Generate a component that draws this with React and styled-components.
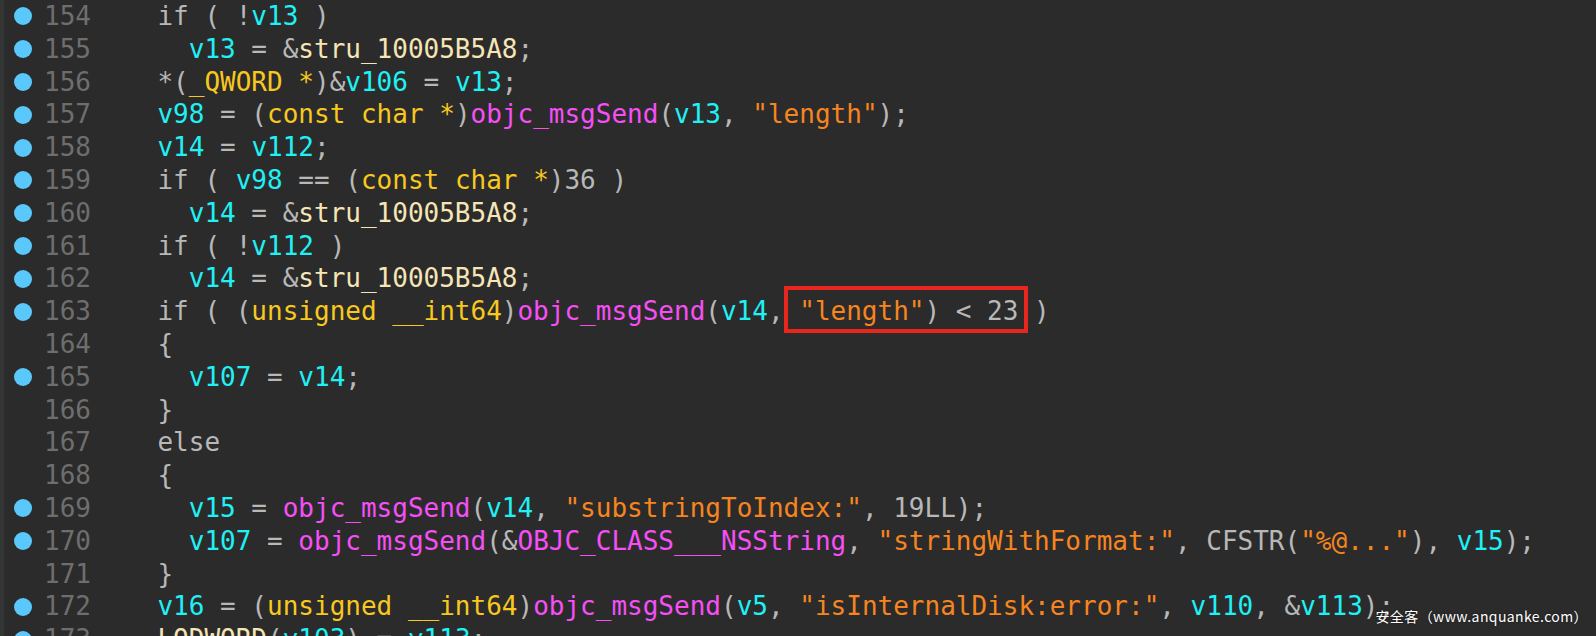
import styled, { createGlobalStyle } from "styled-components";

const GlobalStyle = createGlobalStyle`
  html, body {
    margin: 0;
    padding: 0;
    background: #2b2b2b;
    overflow: hidden;
  }
`;

const COLORS = {
  p: "#b8b8b8",
  v: "#1ff1f5",
  t: "#f8c81f",
  f: "#f64ff6",
  s: "#f7851f",
  c: "#f6e5b6",
};

const CHAR_W = 15.65;

const Editor = styled.div`
  position: relative;
  width: 1596px;
  height: 636px;
  overflow: hidden;
  background: #2b2b2b;
  border-left: 4px solid #343636;
  box-sizing: border-box;
  font-family: "DejaVu Sans Mono", "Liberation Mono", monospace;
  font-size: 26px;
`;

const Line = styled.div`
  display: flex;
  align-items: center;
  height: 32.8px;
  line-height: 32.8px;
  white-space: pre;
`;

const DotCell = styled.div`
  width: 40px;
  display: flex;
  align-items: center;
`;

const Dot = styled.span`
  width: 18px;
  height: 18px;
  margin-left: 10px;
  border-radius: 50%;
  background: ${({ $on }) => ($on ? "#5ac8fa" : "transparent")};
`;

const LineNo = styled.span`
  width: ${CHAR_W * 3}px;
  color: #6e6e6e;
`;

const Code = styled.span`
  margin-left: ${({ $indent }) => 66.5 + $indent * CHAR_W}px;
`;

const Tok = styled.span`
  color: ${({ $k }) => COLORS[$k]};
`;

const Marked = styled.span`
  position: relative;
  &::after {
    content: "";
    position: absolute;
    left: -15px;
    right: -10px;
    top: -10px;
    bottom: -7px;
    border: 4px solid #e8261d;
    box-sizing: border-box;
  }
`;

const Watermark = styled.div`
  position: absolute;
  right: 8px;
  bottom: 12px;
  font-family: "Noto Sans CJK SC", "Noto Sans", sans-serif;
  font-size: 14px;
  letter-spacing: 0.4px;
  line-height: 15px;
  color: #ffffff;
  text-shadow: 0 0 2px rgba(0, 0, 0, 0.5);
  white-space: pre;
`;

const lines = [
  { n: 154, dot: true, i: 0, t: [["p", "if ( !"], ["v", "v13"], ["p", " )"]] },
  { n: 155, dot: true, i: 2, t: [["v", "v13"], ["p", " = &"], ["c", "stru_10005B5A8"], ["p", ";"]] },
  { n: 156, dot: true, i: 0, t: [["p", "*("], ["t", "_QWORD *"], ["p", ")&"], ["v", "v106"], ["p", " = "], ["v", "v13"], ["p", ";"]] },
  { n: 157, dot: true, i: 0, t: [["v", "v98"], ["p", " = ("], ["t", "const char *"], ["p", ")"], ["f", "objc_msgSend"], ["p", "("], ["v", "v13"], ["p", ", "], ["s", "\"length\""], ["p", ");"]] },
  { n: 158, dot: true, i: 0, t: [["v", "v14"], ["p", " = "], ["v", "v112"], ["p", ";"]] },
  { n: 159, dot: true, i: 0, t: [["p", "if ( "], ["v", "v98"], ["p", " == ("], ["t", "const char *"], ["p", ")36 )"]] },
  { n: 160, dot: true, i: 2, t: [["v", "v14"], ["p", " = &"], ["c", "stru_10005B5A8"], ["p", ";"]] },
  { n: 161, dot: true, i: 0, t: [["p", "if ( !"], ["v", "v112"], ["p", " )"]] },
  { n: 162, dot: true, i: 2, t: [["v", "v14"], ["p", " = &"], ["c", "stru_10005B5A8"], ["p", ";"]] },
  {
    n: 163, dot: true, i: 0,
    t: [["p", "if ( ("], ["t", "unsigned __int64"], ["p", ")"], ["f", "objc_msgSend"], ["p", "("], ["v", "v14"], ["p", ", "]],
    mark: [["s", "\"length\""], ["p", ") < 23"]],
    after: [["p", " )"]],
  },
  { n: 164, dot: false, i: 0, t: [["p", "{"]] },
  { n: 165, dot: true, i: 2, t: [["v", "v107"], ["p", " = "], ["v", "v14"], ["p", ";"]] },
  { n: 166, dot: false, i: 0, t: [["p", "}"]] },
  { n: 167, dot: false, i: 0, t: [["p", "else"]] },
  { n: 168, dot: false, i: 0, t: [["p", "{"]] },
  { n: 169, dot: true, i: 2, t: [["v", "v15"], ["p", " = "], ["f", "objc_msgSend"], ["p", "("], ["v", "v14"], ["p", ", "], ["s", "\"substringToIndex:\""], ["p", ", 19LL);"]] },
  { n: 170, dot: true, i: 2, t: [["v", "v107"], ["p", " = "], ["f", "objc_msgSend"], ["p", "(&"], ["f", "OBJC_CLASS___NSString"], ["p", ", "], ["s", "\"stringWithFormat:\""], ["p", ", CFSTR("], ["s", "\"%@...\""], ["p", "), "], ["v", "v15"], ["p", ");"]] },
  { n: 171, dot: false, i: 0, t: [["p", "}"]] },
  { n: 172, dot: true, i: 0, t: [["v", "v16"], ["p", " = ("], ["t", "unsigned __int64"], ["p", ")"], ["f", "objc_msgSend"], ["p", "("], ["v", "v5"], ["p", ", "], ["s", "\"isInternalDisk:error:\""], ["p", ", "], ["v", "v110"], ["p", ", &"], ["v", "v113"], ["p", ");"]] },
  { n: 173, dot: true, i: 0, t: [["c", "LODWORD"], ["p", "("], ["v", "v103"], ["p", ") = "], ["v", "v113"], ["p", ";"]] },
];

const renderToks = (toks) =>
  toks.map(([k, text], idx) => (
    <Tok key={idx} $k={k}>
      {text}
    </Tok>
  ));

export default function App() {
  return (
    <>
      <GlobalStyle />
      <Editor>
        {lines.map((line) => (
          <Line key={line.n}>
            <DotCell>
              <Dot $on={line.dot} />
            </DotCell>
            <LineNo>{line.n}</LineNo>
            <Code $indent={line.i}>
              {renderToks(line.t)}
              {line.mark ? <Marked>{renderToks(line.mark)}</Marked> : null}
              {line.after ? renderToks(line.after) : null}
            </Code>
          </Line>
        ))}
        <Watermark>安全客（www.anquanke.com）</Watermark>
      </Editor>
    </>
  );
}
